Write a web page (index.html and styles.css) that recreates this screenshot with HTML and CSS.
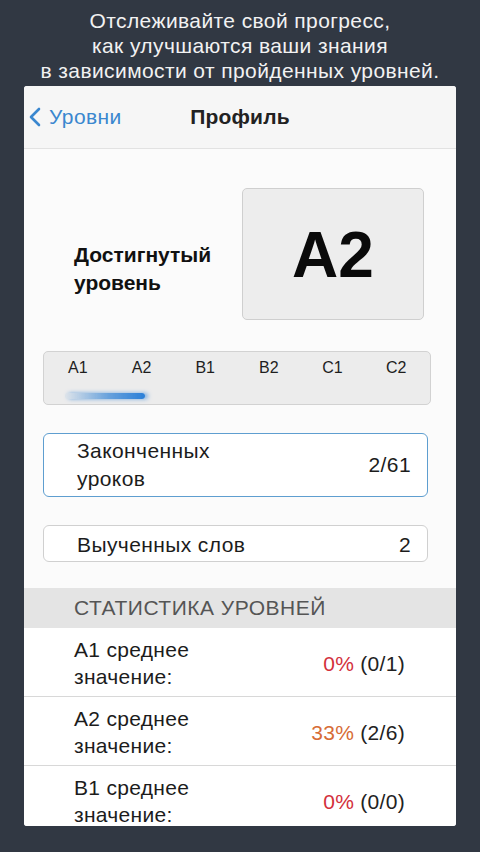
FILE: index.html
```html
<!DOCTYPE html>
<html lang="ru">
<head>
    <meta charset="UTF-8">
    <meta name="viewport" content="width=device-width, initial-scale=1.0">
    <title>Профиль</title>
    <link rel="stylesheet" href="styles.css">
</head>
<body>
    <div class="caption">
        Отслеживайте свой прогресс,<br>
        как улучшаются ваши знания<br>
        в зависимости от пройденных уровней.
    </div>

    <div class="screen">
        <div class="navbar">
            <a class="back" href="#">
                <svg class="chevron" width="14" height="20" viewBox="0 0 14 20">
                    <path d="M11 2 L3 10 L11 18" fill="none" stroke="#3a87cf" stroke-width="2.6" stroke-linecap="round" stroke-linejoin="round"/>
                </svg>
                Уровни
            </a>
            <div class="nav-title">Профиль</div>
        </div>

        <div class="content">
            <div class="level-row">
                <div class="level-label">Достигнутый<br>уровень</div>
                <div class="level-box">A2</div>
            </div>

            <div class="level-scale">
                <div class="scale-labels">
                    <span>A1</span>
                    <span>A2</span>
                    <span>B1</span>
                    <span>B2</span>
                    <span>C1</span>
                    <span>C2</span>
                </div>
                <div class="scale-track">
                    <div class="scale-fill"></div>
                </div>
            </div>

            <div class="info-box active">
                <div class="info-name">Законченных<br>уроков</div>
                <div class="info-value">2/61</div>
            </div>

            <div class="info-box single">
                <div class="info-name">Выученных слов</div>
                <div class="info-value">2</div>
            </div>

            <div class="section-title">СТАТИСТИКА УРОВНЕЙ</div>

            <ul class="stats-list">
                <li class="stats-item">
                    <div class="stats-name">A1 среднее<br>значение:</div>
                    <div class="stats-value"><span class="pct low">0%</span> (0/1)</div>
                </li>
                <li class="stats-item">
                    <div class="stats-name">A2 среднее<br>значение:</div>
                    <div class="stats-value"><span class="pct mid">33%</span> (2/6)</div>
                </li>
                <li class="stats-item">
                    <div class="stats-name">B1 среднее<br>значение:</div>
                    <div class="stats-value"><span class="pct low">0%</span> (0/0)</div>
                </li>
            </ul>
        </div>
    </div>
</body>
</html>
```

FILE: styles.css
```css
* {
    margin: 0;
    padding: 0;
    box-sizing: border-box;
}

body {
    font-family: 'Liberation Sans', Arial, sans-serif;
    background: #313843;
    width: 480px;
    height: 852px;
    overflow: hidden;
    color: #1c1c1c;
}

.caption {
    color: #f2f2f2;
    font-size: 21px;
    letter-spacing: 0.4px;
    line-height: 25px;
    text-align: center;
    padding-top: 8px;
}

.screen {
    margin: 3px 24px 0;
    height: 740px;
    background: #fbfbfb;
    border-radius: 3px;
    overflow: hidden;
}

/* top navigation */
.navbar {
    position: relative;
    height: 63px;
    background: #f6f6f6;
    border-bottom: 1px solid #e2e2e2;
    display: flex;
    align-items: center;
    justify-content: center;
}

.back {
    position: absolute;
    left: 4px;
    top: 0;
    height: 62px;
    display: flex;
    align-items: center;
    gap: 7px;
    color: #3a87cf;
    font-size: 21px;
    letter-spacing: 0.4px;
    text-decoration: none;
}

.nav-title {
    font-size: 21px;
    letter-spacing: 0.2px;
    font-weight: bold;
    color: #222;
}

/* achieved level */
.level-row {
    display: flex;
    justify-content: space-between;
    align-items: flex-start;
    padding: 39px 32px 0 50px;
}

.level-label {
    margin-top: 53px;
    font-size: 21px;
    line-height: 28px;
    font-weight: bold;
    color: #111;
}

.level-box {
    width: 182px;
    height: 132px;
    background: #ededed;
    border: 1px solid #cfcfcf;
    border-radius: 5px;
    display: flex;
    align-items: center;
    justify-content: center;
    font-size: 64px;
    font-weight: bold;
    color: #0a0a0a;
    padding-top: 2px;
}

.level-scale {
    margin: 31px 25px 0 19px;
    height: 54px;
    background: #ececec;
    border: 1px solid #d2d2d2;
    border-radius: 5px;
    padding: 6px 2px 0;
}

.scale-labels {
    display: grid;
    grid-template-columns: repeat(6, 1fr);
    text-align: center;
    font-size: 16px;
    line-height: 20px;
    color: #1e1e1e;
}

.scale-track {
    padding: 15px 0 0 19px;
}

.scale-fill {
    width: 80px;
    height: 6px;
    border-radius: 3px;
    background: linear-gradient(90deg, rgba(58, 135, 214, 0.08) 0%, rgba(58, 135, 214, 0.75) 55%, #2a7fd8 100%);
    box-shadow: 3px 0 4px rgba(42, 127, 216, 0.6);
    filter: blur(0.7px);
}

/* counters */
.info-box {
    margin: 28px 28px 0 19px;
    border: 1px solid #d0d0d0;
    border-radius: 6px;
    background: #fff;
    display: flex;
    align-items: center;
    justify-content: space-between;
    padding: 4px 16px 4px 33px;
    font-size: 21px;
    letter-spacing: 0.4px;
    line-height: 28px;
}

.info-box.active {
    border-color: #5e9ed0;
    height: 64px;
}

.info-box.single {
    height: 37px;
    padding-top: 2px;
    padding-bottom: 0;
}

.section-title {
    margin-top: 26px;
    height: 40px;
    background: #e4e4e4;
    color: #555;
    font-size: 21px;
    letter-spacing: 0.5px;
    line-height: 40px;
    padding-left: 50px;
}

/* per level stats */
.stats-list {
    list-style: none;
    background: #fff;
}

.stats-item {
    display: flex;
    align-items: center;
    justify-content: space-between;
    padding: 8px 51px 6px 50px;
    border-bottom: 1px solid #d8d8d8;
    font-size: 21px;
    letter-spacing: 0.3px;
    line-height: 27px;
}

.stats-value {
    color: #222;
}

.pct.low {
    color: #d3303c;
}

.pct.mid {
    color: #d76c36;
}
```
